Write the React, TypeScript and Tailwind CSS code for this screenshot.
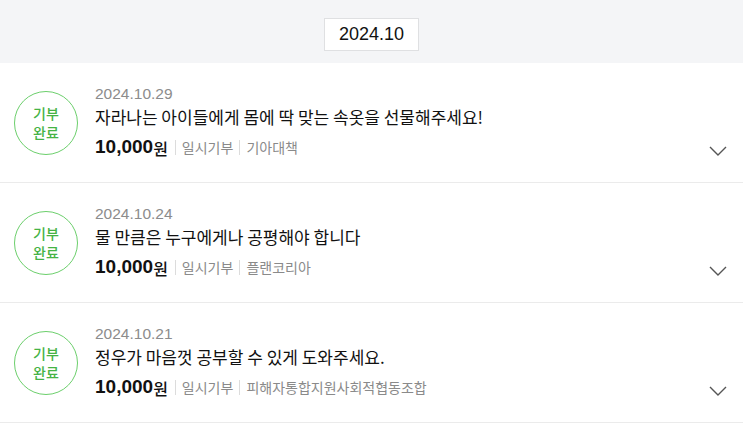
const items = [
  {
    date: "2024.10.29",
    title: "자라나는 아이들에게 몸에 딱 맞는 속옷을 선물해주세요!",
    org: "기아대책",
  },
  {
    date: "2024.10.24",
    title: "물 만큼은 누구에게나 공평해야 합니다",
    org: "플랜코리아",
  },
  {
    date: "2024.10.21",
    title: "정우가 마음껏 공부할 수 있게 도와주세요.",
    org: "피해자통합지원사회적협동조합",
  },
];

const font = {
  fontFamily: '"Noto Sans CJK KR", "Liberation Sans", sans-serif',
};

const Chevron = () => (
  <svg width="18" height="10" viewBox="0 0 18 10" fill="none">
    <path d="M1 1l8 8 8-8" stroke="#555" strokeWidth="1.4" />
  </svg>
);

export default function App() {
  return (
    <div className="w-[743px] h-[424px] bg-white overflow-hidden" style={font}>
      <div className="h-[63px] pt-[6px] bg-[#f4f5f7] flex items-center justify-center">
        <div className="w-[95px] h-[33px] bg-white border border-[#dfe0e2] flex items-center justify-center text-[18px] text-[#111] font-['Liberation_Sans',sans-serif]">
          2024.10
        </div>
      </div>
      {items.map((it) => (
        <div
          key={it.date}
          className="h-[120px] border-b border-[#ebebeb] flex items-center pl-[14px] pr-[16px]"
        >
          <div className="w-[64px] h-[64px] shrink-0 rounded-full border-[1.5px] border-[#6ccf6c] flex flex-col items-center justify-center text-[14px] leading-[19px] font-medium text-[#45b345]">
            <span>기부</span>
            <span>완료</span>
          </div>
          <div className="ml-[17px] flex-1 flex flex-col -mt-[2px]">
            <div className="text-[15.5px] leading-[20px] text-[#8c8c8c] font-['Liberation_Sans',sans-serif]">
              {it.date}
            </div>
            <div className="mt-[1px] text-[17px] leading-[24px] text-[#111]">
              {it.title}
            </div>
            <div className="mt-[7px] flex items-center h-[24px]">
              <span className="text-[19px] font-bold text-[#111] font-['Liberation_Sans',sans-serif]">
                10,000
              </span>
              <span className="text-[16px] font-medium text-[#111]">원</span>
              <span className="ml-[7px] mr-[6px] w-px h-[15px] bg-[#dcdcdc]" />
              <span className="text-[14px] text-[#8a8a8a]">일시기부</span>
              <span className="mx-[6px] w-px h-[15px] bg-[#dcdcdc]" />
              <span className="text-[14px] text-[#8a8a8a]">{it.org}</span>
            </div>
          </div>
          <div className="self-end mb-[26px]">
            <Chevron />
          </div>
        </div>
      ))}
    </div>
  );
}
